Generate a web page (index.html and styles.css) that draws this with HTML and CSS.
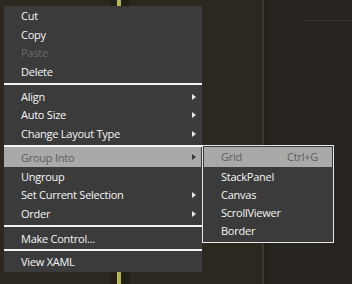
FILE: index.html
```html
<!DOCTYPE html>
<html lang="en">
<head>
  <meta charset="UTF-8">
  <title>Context Menu</title>
  <link rel="stylesheet" href="styles.css">
</head>
<body>
  <div class="stage">
    <div class="guide"></div>
    <div class="divider"></div>
    <div class="rule"></div>

    <div class="menu">
      <div class="item">Cut</div>
      <div class="item">Copy</div>
      <div class="item disabled">Paste</div>
      <div class="item">Delete</div>
      <div class="sep"></div>
      <div class="item sub">Align</div>
      <div class="item sub">Auto Size</div>
      <div class="item sub">Change Layout Type</div>
      <div class="sep tight"></div>
      <div class="item sub active">
        Group Into
        <div class="menu submenu">
          <div class="item active">Grid <span class="key">Ctrl+G</span></div>
          <div class="item">StackPanel</div>
          <div class="item">Canvas</div>
          <div class="item">ScrollViewer</div>
          <div class="item">Border</div>
        </div>
      </div>
      <div class="item">Ungroup</div>
      <div class="item sub">Set Current Selection</div>
      <div class="item sub">Order</div>
      <div class="sep"></div>
      <div class="item">Make Control...</div>
      <div class="sep last"></div>
      <div class="item">View XAML</div>
    </div>
  </div>
</body>
</html>
```

FILE: styles.css
```css
body {
  margin: 0;
  background-color: #2c2820;
  font-family: 'Open Sans', sans-serif;
  font-size: 11px;
  letter-spacing: -0.25px;
  color: #f6f6f6;
}

.stage {
  position: relative;
  width: 352px;
  height: 284px;
  overflow: hidden;
  padding: 6px 0 0 4px;
  box-sizing: border-box;
}

/* background artboard bits */
.guide {
  position: absolute;
  top: 0;
  bottom: 0;
  left: 110px;
  width: 20px;
  background: linear-gradient(to right, #25221b 0, #25221b 7px, #c4bd5c 7px, #a9b04a 11px, #221f19 11px, #221f19 20px);
}

.divider {
  position: absolute;
  top: 0;
  bottom: 0;
  left: 262px;
  right: 0;
  border-left: 2px solid #3d3830;
  background: linear-gradient(to right, #211e19 0, #28241f 8px);
}

.rule {
  position: absolute;
  top: 20px;
  left: 304px;
  right: 0;
  height: 1px;
  background: #37322a;
}

.menu {
  position: relative;
  width: 198px;
  padding: 1px 0 0;
  background: #3b3b3b;
}

.item {
  position: relative;
  height: 18.67px;
  line-height: 18.67px;
  padding-left: 17px;
  white-space: nowrap;
}

.item.disabled {
  color: #6a6a6a;
}

.item.sub::after {
  content: '';
  position: absolute;
  right: 6px;
  top: 6px;
  border-left: 4px solid #e6e6e6;
  border-top: 3.5px solid transparent;
  border-bottom: 3.5px solid transparent;
}

.item.active {
  background: #a9a9a9;
  color: #5c5c5c;
}

.menu > .item.active {
  height: 20px;
  line-height: 21px;
  margin: 0 1px 1px 0;
}

.item.sub.active::after {
  right: 5px;
  top: 7px;
  border-left-color: #3a3a3a;
}

.sep {
  height: 2px;
  margin: 1px 0 3px;
  background: #f4f4f4;
}

.sep.tight {
  margin-bottom: 0;
}

.sep.last {
  margin-bottom: 2px;
}

.submenu {
  position: absolute;
  top: -2px;
  left: 198px;
  width: 128px;
  padding: 1px 1px 2px;
  border: 1px solid #e8e8e8;
  color: #f6f6f6;
  line-height: 18px;
  z-index: 1;
}

.submenu .item {
  height: 18px;
  line-height: 18px;
}

.submenu > .item.active {
  height: 20px;
  line-height: 20px;
  margin: 0 0 1px;
}

.key {
  position: absolute;
  right: 14px;
  top: 0;
}
```
